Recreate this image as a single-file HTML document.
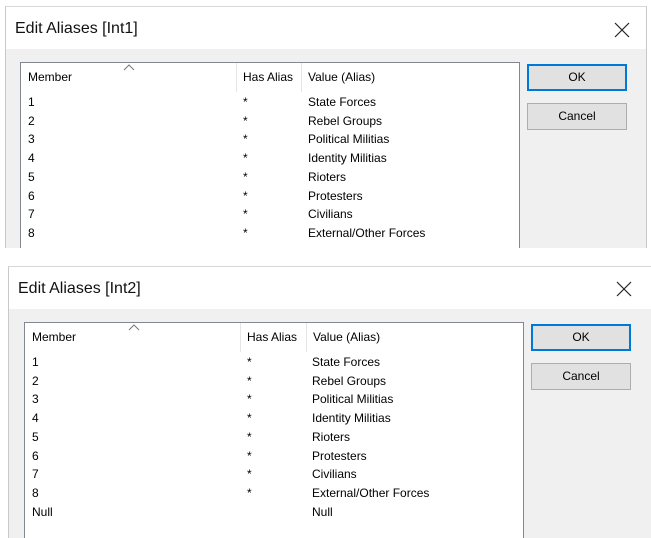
<!DOCTYPE html>
<html><head><meta charset="utf-8"><style>
html,body{margin:0;padding:0;background:#fff;width:651px;height:538px;overflow:hidden;position:relative;font-family:"Liberation Sans",sans-serif;color:#000}
.a{position:absolute}
.dlg{position:absolute;background:#f0f0f0;border-left:1px solid #c8c8c8;border-right:1px solid #c8c8c8;border-top:1px solid #d8d8d8}
.title{position:absolute;left:0;right:0;top:0;background:#fff}
.tt{position:absolute;font-size:16px;color:#111}
.list{position:absolute;background:#fff;border:1px solid #828790;border-bottom:none}
.t{position:absolute;font-size:12px;white-space:nowrap}
.sep{position:absolute;width:1px;background:#e5e5e5}
.btn{position:absolute;width:98px;height:25px;background:#e1e1e1;border:1px solid #adadad;font-size:12px;text-align:center;line-height:25px}
.ok{border:2px solid #0078d7;width:96px;height:23px;line-height:23px}
</style></head><body>

<div class="dlg" style="left:5px;top:6px;width:640px;height:241px">
  <div class="title" style="height:42px"></div>
  <div class="tt" style="left:9px;top:13px">Edit Aliases [Int1]</div>
  <svg class="a" style="left:608px;top:15px" width="16" height="16"><path d="M1 1L15 15M15 1L1 15" stroke="#222" stroke-width="1.2"/></svg>
</div>
<div class="list" style="left:20px;top:62px;width:498px;height:185px"></div>
<svg class="a" style="left:123px;top:64px" width="12" height="7"><path d="M1 6L6 1L11 6" stroke="#777" fill="none"/></svg>
<div class="sep" style="left:236px;top:63px;height:29px"></div>
<div class="sep" style="left:301px;top:63px;height:29px"></div>
<div class="t" style="left:28px;top:70px">Member</div>
<div class="t" style="left:243px;top:70px">Has Alias</div>
<div class="t" style="left:308px;top:70px">Value (Alias)</div>
<div class="btn ok" style="left:527px;top:64px">OK</div>
<div class="btn" style="left:527px;top:103px">Cancel</div>

<div class="dlg" style="left:8px;top:266px;width:643px;height:272px">
  <div class="title" style="height:42px"></div>
  <div class="tt" style="left:9px;top:13px">Edit Aliases [Int2]</div>
  <svg class="a" style="left:607px;top:14px" width="16" height="16"><path d="M1 1L15 15M15 1L1 15" stroke="#222" stroke-width="1.2"/></svg>
</div>
<div class="list" style="left:24px;top:322px;width:498px;height:216px"></div>
<svg class="a" style="left:128px;top:324px" width="12" height="7"><path d="M1 6L6 1L11 6" stroke="#777" fill="none"/></svg>
<div class="sep" style="left:240px;top:323px;height:29px"></div>
<div class="sep" style="left:306px;top:323px;height:29px"></div>
<div class="t" style="left:32px;top:330px">Member</div>
<div class="t" style="left:247px;top:330px">Has Alias</div>
<div class="t" style="left:313px;top:330px">Value (Alias)</div>
<div class="btn ok" style="left:531px;top:324px">OK</div>
<div class="btn" style="left:531px;top:363px">Cancel</div>

<div id="rows"></div>
<script>
var vals=["State Forces","Rebel Groups","Political Militias","Identity Militias","Rioters","Protesters","Civilians","External/Other Forces"];
var h="";
function rows(x0,y0,nul){
  for(var i=0;i<vals.length;i++){
    var y=y0+i*18.7;
    h+='<div class="t" style="left:'+x0+'px;top:'+y+'px">'+(i+1)+'</div>';
    h+='<div class="t" style="left:'+(x0+215)+'px;top:'+(y)+'px">*</div>';
    h+='<div class="t" style="left:'+(x0+280)+'px;top:'+y+'px">'+vals[i]+'</div>';
  }
  if(nul){var y=y0+8*18.7;
    h+='<div class="t" style="left:'+x0+'px;top:'+y+'px">Null</div>';
    h+='<div class="t" style="left:'+(x0+280)+'px;top:'+y+'px">Null</div>';}
}
rows(28,95,false);
rows(32,355,true);
document.getElementById("rows").innerHTML=h;
</script>
</body></html>
